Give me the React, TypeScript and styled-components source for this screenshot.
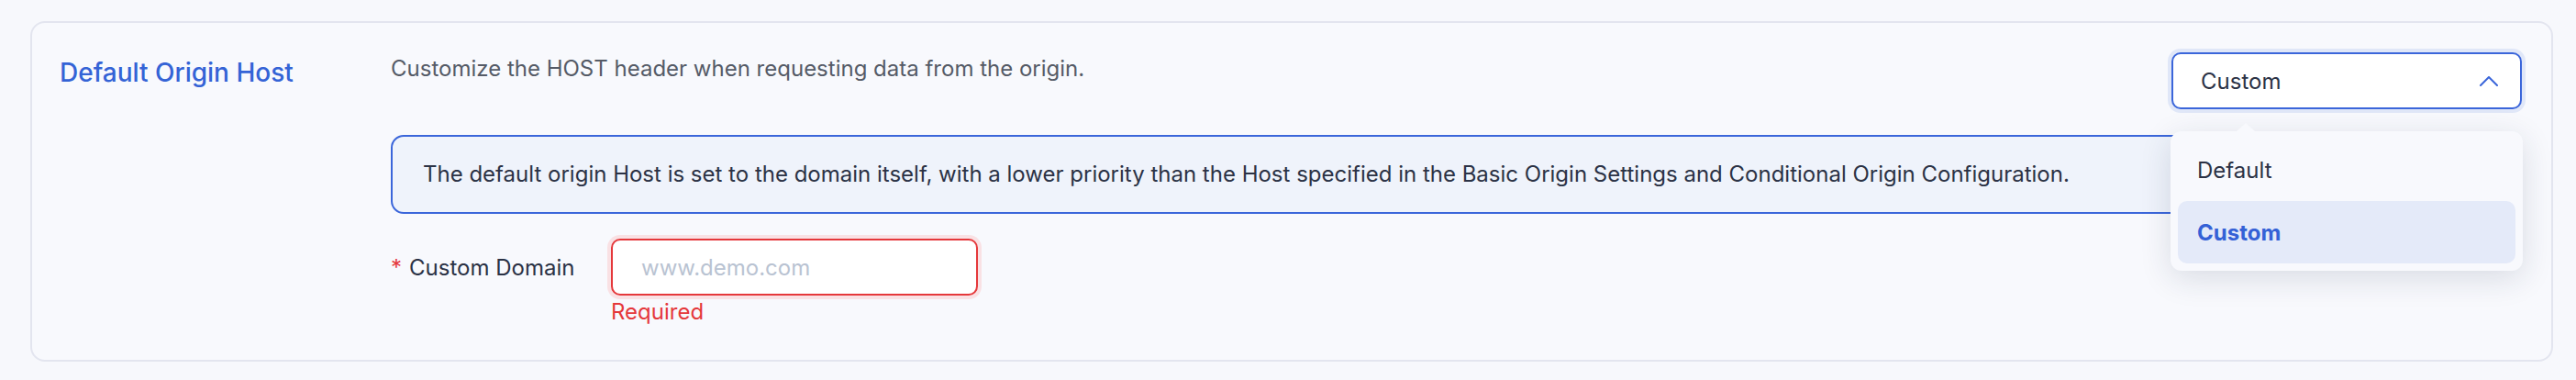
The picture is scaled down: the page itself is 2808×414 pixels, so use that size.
import React, { useState } from "react";
import styled, { createGlobalStyle } from "styled-components";

const GlobalStyle = createGlobalStyle`
  html, body {
    margin: 0;
    padding: 0;
    background-color: #f7f8fc;
    font-family: Inter, "Noto Sans", "Liberation Sans", sans-serif;
  }
  * {
    box-sizing: border-box;
  }
`;

const Page = styled.div`
  padding: 23px 25px 20px 33px;
`;

const Card = styled.section`
  display: grid;
  grid-template-columns: 361px 1fr;
  border: 2px solid #e3e5ef;
  border-radius: 16px;
  padding: 32px 32px 36px 30px;
  background-color: #f8f9fd;
`;

const Title = styled.h3`
  margin: 0;
  font-size: 28px;
  line-height: 44px;
  font-weight: 500;
  color: #3463d6;
`;

const Body = styled.div`
  display: flex;
  flex-direction: column;
`;

const TopRow = styled.div`
  display: flex;
  justify-content: space-between;
  align-items: flex-start;
`;

const Description = styled.p`
  margin: 0;
  font-size: 24px;
  line-height: 36px;
  color: #555b67;
`;

const SelectWrap = styled.div`
  position: relative;
  width: 382px;
`;

const SelectBox = styled.div`
  display: flex;
  align-items: center;
  justify-content: space-between;
  height: 62px;
  padding: 0 24px 0 30px;
  background-color: #ffffff;
  border: 2px solid #3b66da;
  border-radius: 10px;
  box-shadow: 0 0 0 4px #e0e7f8;
  font-size: 24px;
  color: #2b3245;
  cursor: pointer;
`;

const Popup = styled.ul`
  position: absolute;
  top: calc(100% + 24px);
  left: -1px;
  width: 384px;
  margin: 0;
  padding: 8px;
  list-style: none;
  background-color: #f8f9fd;
  border-radius: 12px;
  box-shadow: 0 8px 34px rgba(30, 40, 70, 0.14);
  z-index: 10;

  &::before {
    content: "";
    position: absolute;
    top: -9px;
    left: 72px;
    border-left: 10px solid transparent;
    border-right: 10px solid transparent;
    border-bottom: 9px solid #f8f9fd;
  }
`;

const Option = styled.li<{ $active?: boolean }>`
  display: flex;
  align-items: center;
  height: 68px;
  padding: 0 21px;
  border-radius: 10px;
  font-size: 24px;
  font-weight: ${(p) => (p.$active ? 700 : 400)};
  color: ${(p) => (p.$active ? "#3461d6" : "#2b3245")};
  background-color: ${(p) => (p.$active ? "#e4eaf9" : "transparent")};
  cursor: pointer;
`;

const InfoBox = styled.div`
  margin-top: 28px;
  padding: 23px 33px;
  border: 2px solid #3b66da;
  border-radius: 14px;
  background-color: #eff3fb;
  font-size: 24px;
  line-height: 36px;
  color: #2b3245;
`;

const FormRow = styled.div`
  display: grid;
  grid-template-columns: 240px 400px;
  margin-top: 27px;
`;

const Label = styled.label`
  display: flex;
  align-items: center;
  height: 62px;
  font-size: 24px;
  color: #2b3245;
`;

const Star = styled.span`
  color: #e5383b;
  margin-right: 8px;
`;

const Input = styled.input<{ $error?: boolean }>`
  width: 400px;
  height: 62px;
  padding: 0 31px;
  border: 2px solid ${(p) => (p.$error ? "#e5383b" : "#d5d9e2")};
  border-radius: 10px;
  box-shadow: 0 0 0 4px ${(p) => (p.$error ? "#f9e1e4" : "transparent")};
  outline: none;
  font-family: inherit;
  font-size: 24px;
  color: #2b3245;
  background-color: #ffffff;

  &::placeholder {
    color: #b9c3d2;
  }
`;

const ErrorText = styled.div`
  margin-top: 2px;
  font-size: 24px;
  line-height: 32px;
  color: #e5383b;
`;

const Chevron = () => (
  <svg width="20" height="11" viewBox="0 0 20 11" fill="none">
    <polyline
      points="1,10 10,1 19,10"
      stroke="#3b66da"
      strokeWidth="2"
      strokeLinecap="round"
      strokeLinejoin="round"
    />
  </svg>
);

const options = ["Default", "Custom"];

const App = () => {
  const [value, setValue] = useState("Custom");
  const [open, setOpen] = useState(true);
  const [domain, setDomain] = useState("");

  return (
    <Page>
      <GlobalStyle />
      <Card>
        <Title>Default Origin Host</Title>
        <Body>
          <TopRow>
            <Description>
              Customize the HOST header when requesting data from the origin.
            </Description>
            <SelectWrap>
              <SelectBox onClick={() => setOpen(!open)}>
                <span>{value}</span>
                <Chevron />
              </SelectBox>
              {open && (
                <Popup>
                  {options.map((opt) => (
                    <Option
                      key={opt}
                      $active={opt === value}
                      onClick={() => {
                        setValue(opt);
                        setOpen(false);
                      }}
                    >
                      {opt}
                    </Option>
                  ))}
                </Popup>
              )}
            </SelectWrap>
          </TopRow>
          <InfoBox>
            The default origin Host is set to the domain itself, with a lower
            priority than the Host specified in the Basic Origin Settings and
            Conditional Origin Configuration.
          </InfoBox>
          <FormRow>
            <Label>
              <Star>*</Star>Custom Domain
            </Label>
            <div>
              <Input
                $error={domain === ""}
                placeholder="www.demo.com"
                value={domain}
                onChange={(e) => setDomain(e.target.value)}
              />
              {domain === "" && <ErrorText>Required</ErrorText>}
            </div>
          </FormRow>
        </Body>
      </Card>
    </Page>
  );
};

export default App;
